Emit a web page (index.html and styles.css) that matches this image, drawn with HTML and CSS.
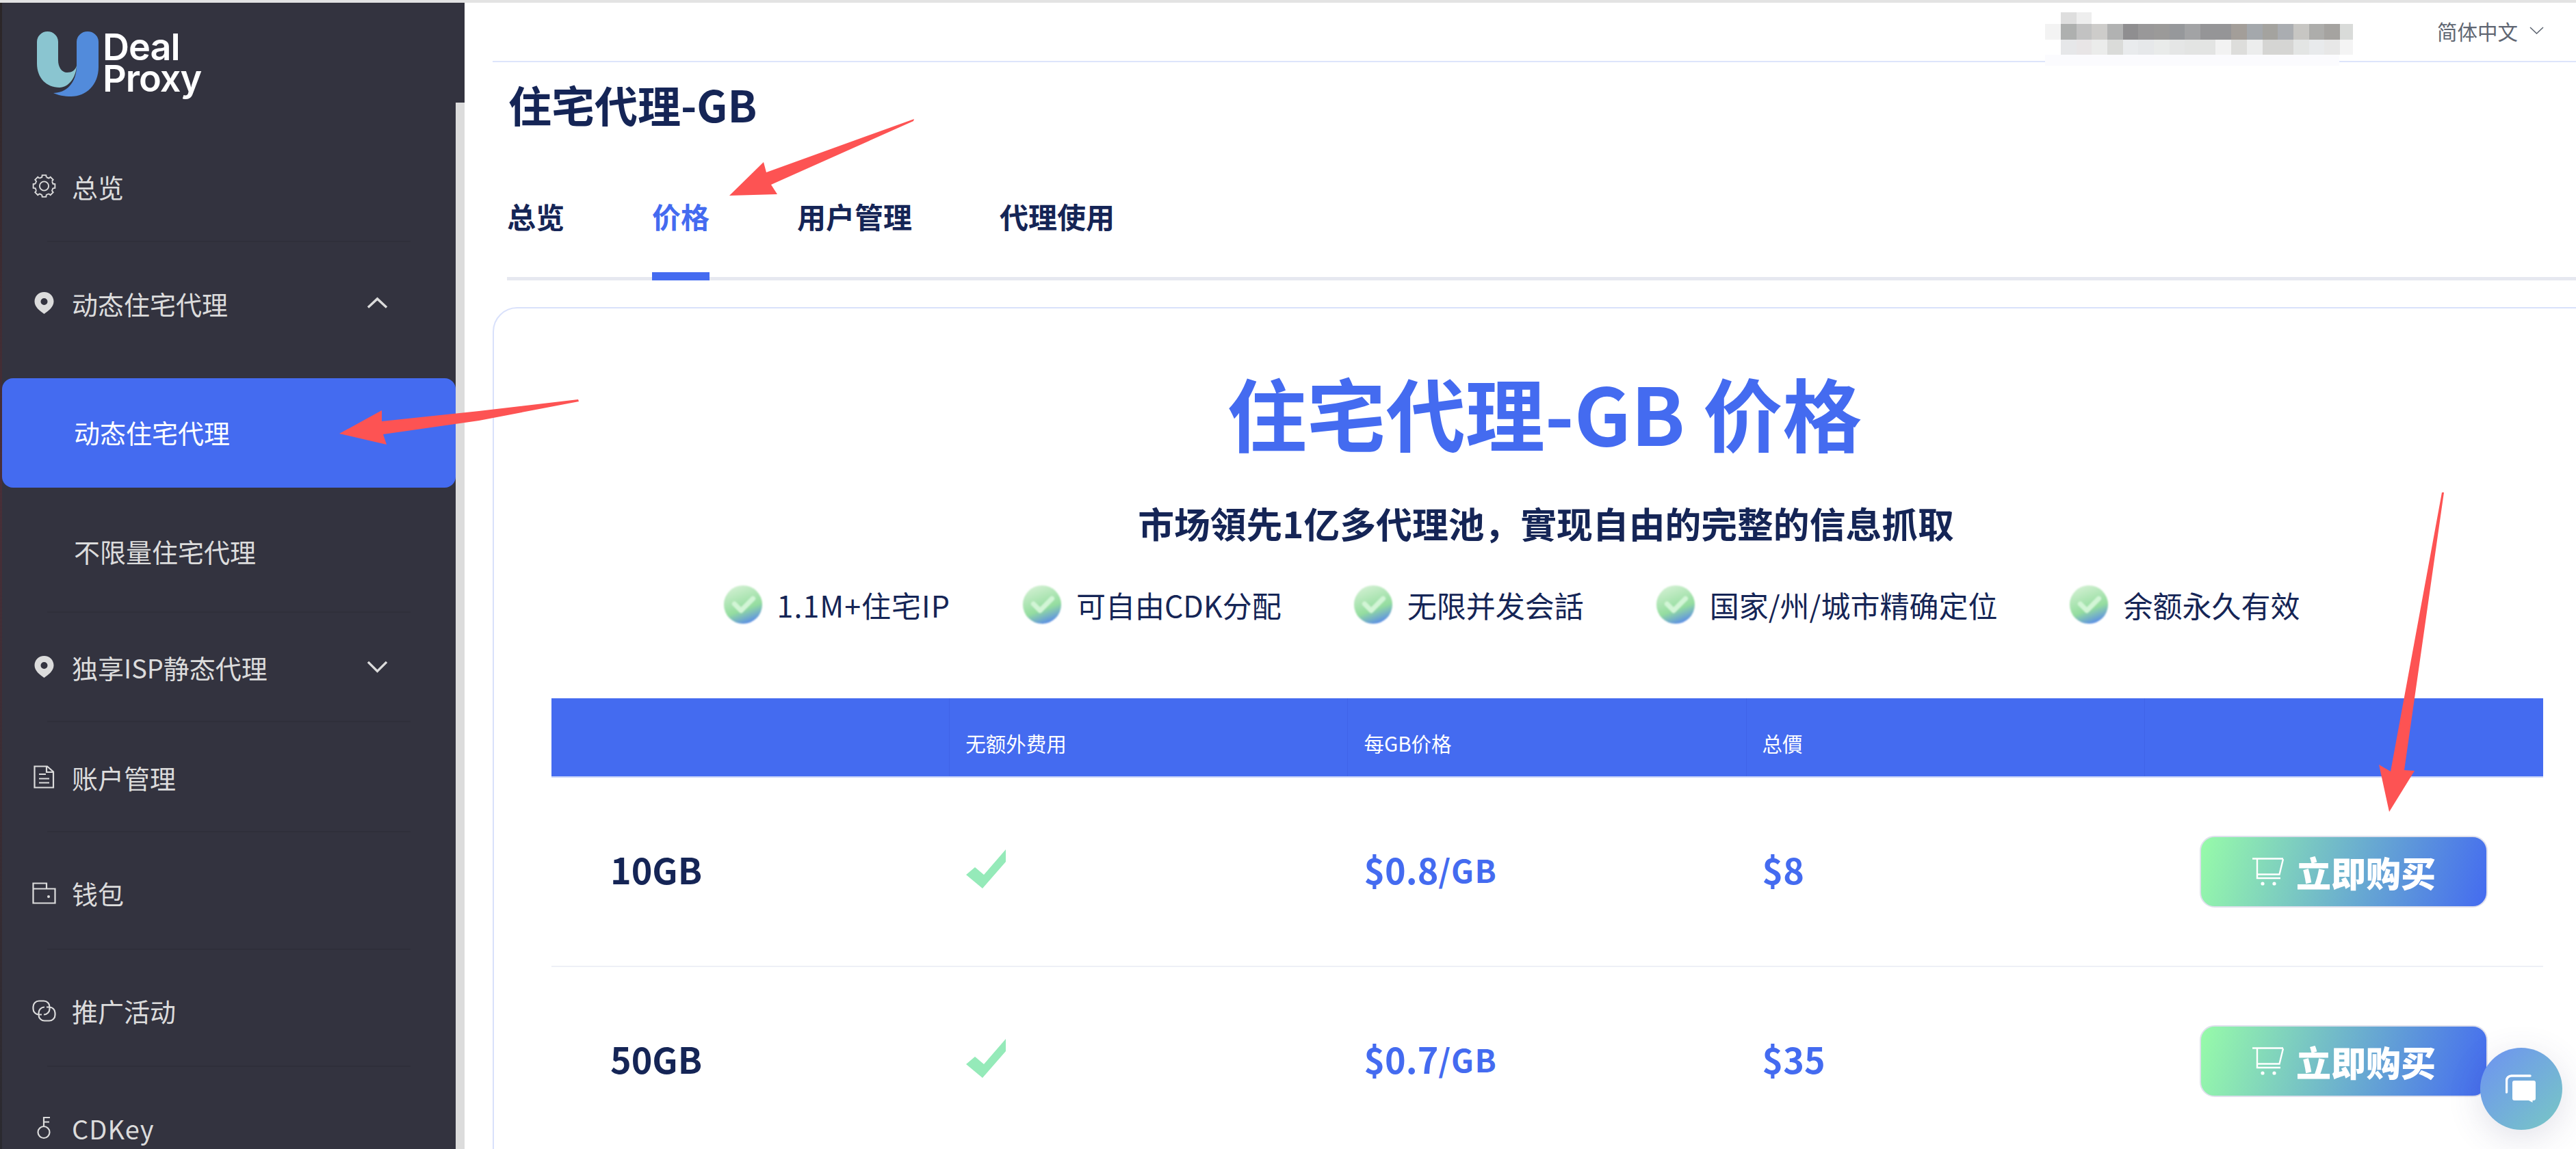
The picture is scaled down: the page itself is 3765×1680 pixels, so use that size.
FILE: index.html
```html
<!DOCTYPE html>
<html lang="zh-CN">
<head>
<meta charset="utf-8">
<title>住宅代理-GB 价格</title>
<link rel="stylesheet" href="styles.css">
</head>
<body>
<svg class="defs" width="0" height="0" aria-hidden="true">
  <defs>
    <linearGradient id="tickBall" x1="0.3" y1="0" x2="0.68" y2="1">
      <stop offset="0" stop-color="#d2f0d2"/>
      <stop offset="0.62" stop-color="#94dd9f"/>
      <stop offset="0.98" stop-color="#5b8de6"/>
    </linearGradient>
    <g id="gearTooth"><path d="M-3.4 -13.6L-3 -16.8H3L3.4 -13.6" fill="none" stroke="currentColor" stroke-width="2"/></g>
    <g id="pin"><path fill-rule="evenodd" d="M14 0C6 0 0 6.200 0 13.800C0 22 8 28 14 32C20 28 28 22 28 13.800C28 6.200 22 0 14 0ZM14 9A5 5 0 1 1 14 19A5 5 0 1 1 14 9Z" fill="currentColor"/></g>
    <g id="cart"><path d="M0 1.500H45M7 1.500V30H41M45 2L39.500 24.500H8" fill="none" stroke="currentColor" stroke-width="2.400"/><circle cx="15" cy="38" r="2.600" fill="currentColor"/><circle cx="32" cy="38" r="2.600" fill="currentColor"/></g>
    <g id="rowTick"><polygon points="0,37 13,26 26,37 58,0 58,18 24,57" fill="#95eab9"/></g>
    <g id="ballTick"><circle cx="30" cy="30" r="29" fill="url(#tickBall)"/><path d="M17 29L27 39L45 21" fill="none" stroke="#d2f5d6" stroke-width="7.500" stroke-linecap="round" stroke-linejoin="round"/></g>
  </defs>
</svg>

<div class="top-strip"></div>
<div class="app">
  <div class="wallpaper"></div>
  <aside class="sidebar">
    <div class="scroll-thumb"></div>
    <div class="logo">
      <svg class="logo-mark" viewBox="0 0 90 95" width="90" height="95" aria-hidden="true">
        <path d="M0 15A15.500 15 0 0 1 31 15V42C31 52 36 60 44 60C51 60 56 57 58 50C57 68 46 82 33 82C14 82 0 68 0 47Z" fill="#8ac5d0"/>
        <path d="M58 15A16 15 0 0 1 90 15V52C90 78 72 95 50 95C40 95 30 93 24 90C42 90 58 76 58 50Z" fill="#528bdb"/>
      </svg>
      <div class="logo-text">Deal
Proxy</div>
    </div>
    <nav class="nav">
      <a class="nav-item row-overview">
        <svg class="nav-icon" viewBox="-18 -18 36 36" aria-hidden="true">
          <circle r="14" fill="none" stroke="currentColor" stroke-width="2" stroke-dasharray="4.600 6.400" stroke-dashoffset="-3.200"/>
          <circle r="7" fill="none" stroke="currentColor" stroke-width="2"/>
          <use href="#gearTooth"/><use href="#gearTooth" transform="rotate(45)"/><use href="#gearTooth" transform="rotate(90)"/><use href="#gearTooth" transform="rotate(135)"/><use href="#gearTooth" transform="rotate(180)"/><use href="#gearTooth" transform="rotate(225)"/><use href="#gearTooth" transform="rotate(270)"/><use href="#gearTooth" transform="rotate(315)"/>
        </svg>
        <span>总览</span>
      </a>
      <div class="sep"></div>
      <a class="nav-item row-dynamic">
        <svg class="nav-icon" viewBox="-3.500 0 35 32" aria-hidden="true"><use href="#pin"/></svg>
        <span>动态住宅代理</span>
        <svg class="chevron" viewBox="0 0 32 18" aria-hidden="true"><path d="M2 16L16 3L30 16" fill="none" stroke="currentColor" stroke-width="3.500"/></svg>
      </a>
      <a class="sub-item sub-active">动态住宅代理</a>
      <a class="sub-item sub-plain">不限量住宅代理</a>
      <div class="sep"></div>
      <a class="nav-item row-isp">
        <svg class="nav-icon" viewBox="-3.500 0 35 32" aria-hidden="true"><use href="#pin"/></svg>
        <span>独享ISP静态代理</span>
        <svg class="chevron" viewBox="0 0 32 20" aria-hidden="true"><path d="M2 3L16 17L30 3" fill="none" stroke="currentColor" stroke-width="3.500"/></svg>
      </a>
      <div class="sep"></div>
      <a class="nav-item row-account">
        <svg class="nav-icon" viewBox="0 0 35 34" aria-hidden="true"><path d="M3.500 1.500H22L31 9.500V32.500H3.500ZM21 2V10H31M10 13H20M10 19.500H25M10 25.500H25" fill="none" stroke="currentColor" stroke-width="2.200"/></svg>
        <span>账户管理</span>
      </a>
      <div class="sep"></div>
      <a class="nav-item row-wallet">
        <svg class="nav-icon" viewBox="0 0 35 32" aria-hidden="true"><path d="M1.500 9.500H33.500V30.500H1.500ZM1.500 9.500V1.500H21V9.500" fill="none" stroke="currentColor" stroke-width="2.200"/><circle cx="24" cy="21" r="2" fill="currentColor"/></svg>
        <span>钱包</span>
      </a>
      <div class="sep"></div>
      <a class="nav-item row-promo">
        <svg class="nav-icon" viewBox="0 0 35 32" aria-hidden="true"><path d="M14 21.500H10A8.500 8.500 0 0 1 1.500 13V10A8.500 8.500 0 0 1 10 1.500H17A8.500 8.500 0 0 1 25.500 10V13A8.500 8.500 0 0 1 17 21.500M21 10.500H25A8.500 8.500 0 0 1 33.500 19V22A8.500 8.500 0 0 1 25 30.500H18A8.500 8.500 0 0 1 9.500 22V19A8.500 8.500 0 0 1 18 10.500" fill="none" stroke="currentColor" stroke-width="2.200"/></svg>
        <span>推广活动</span>
      </a>
      <div class="sep"></div>
      <a class="nav-item row-cdkey">
        <svg class="nav-icon" viewBox="-7 0 35 33" aria-hidden="true"><circle cx="10" cy="23" r="8.500" fill="none" stroke="currentColor" stroke-width="2.200"/><path d="M10 14.500V1.500H19M10 8H18" fill="none" stroke="currentColor" stroke-width="2.200"/></svg>
        <span class="cdkey-label">CDKey</span>
      </a>
    </nav>
  </aside>

  <main class="main">
    <header class="topbar">
      <span class="lang">简体中文</span>
      <svg class="lang-chevron" viewBox="0 0 21 11" aria-hidden="true"><path d="M1 1L10.500 10L20 1" fill="none" stroke="#5f6672" stroke-width="1.600"/></svg>
      <svg class="mosaic" viewBox="0 0 450 78" width="450" height="78" shape-rendering="crispEdges" aria-hidden="true">
        <rect x="0" y="62" width="430" height="16" fill="#fbfbfe"/>
        <rect x="23" y="0" width="23" height="17" fill="#dedede"/><rect x="46" y="0" width="22" height="17" fill="#eeeeee"/>
        <rect x="0" y="17" width="23" height="23" fill="#f3f3f3"/><rect x="23" y="17" width="23" height="23" fill="#aeb0af"/><rect x="46" y="17" width="22" height="23" fill="#c2c2c2"/><rect x="68" y="17" width="23" height="23" fill="#cdccca"/><rect x="91" y="17" width="23" height="23" fill="#b1b2b2"/><rect x="114" y="17" width="22" height="23" fill="#8f8e90"/><rect x="136" y="17" width="23" height="23" fill="#999899"/><rect x="159" y="17" width="23" height="23" fill="#9b9a99"/><rect x="182" y="17" width="22" height="23" fill="#96989b"/><rect x="204" y="17" width="23" height="23" fill="#a2a3a5"/><rect x="227" y="17" width="45" height="23" fill="#959597"/><rect x="272" y="17" width="23" height="23" fill="#a39e99"/><rect x="295" y="17" width="23" height="23" fill="#a4a8ac"/><rect x="318" y="17" width="22" height="23" fill="#a4a39f"/><rect x="340" y="17" width="23" height="23" fill="#aaadb1"/><rect x="363" y="17" width="23" height="23" fill="#c7c6c3"/><rect x="386" y="17" width="22" height="23" fill="#adadab"/><rect x="408" y="17" width="23" height="23" fill="#a5a3a0"/><rect x="431" y="17" width="19" height="23" fill="#d9dbd9"/>
        <rect x="23" y="40" width="23" height="22" fill="#e6e7e9"/><rect x="46" y="40" width="22" height="22" fill="#e8e5e6"/><rect x="68" y="40" width="23" height="22" fill="#ebeceb"/><rect x="91" y="40" width="23" height="22" fill="#dadbd9"/><rect x="114" y="40" width="22" height="22" fill="#e9ebed"/><rect x="136" y="40" width="23" height="22" fill="#e6e8ea"/><rect x="159" y="40" width="23" height="22" fill="#e9ebea"/><rect x="182" y="40" width="22" height="22" fill="#e5e6e6"/><rect x="204" y="40" width="45" height="22" fill="#e3e4e3"/><rect x="249" y="40" width="23" height="22" fill="#f2f2f2"/><rect x="272" y="40" width="23" height="22" fill="#dddddb"/><rect x="295" y="40" width="23" height="22" fill="#eceded"/><rect x="318" y="40" width="45" height="22" fill="#d5d5d3"/><rect x="363" y="40" width="23" height="22" fill="#e3e5e4"/><rect x="386" y="40" width="22" height="22" fill="#e8eaec"/><rect x="408" y="40" width="23" height="22" fill="#e7e7e7"/><rect x="431" y="40" width="19" height="22" fill="#f4f4f4"/>
      </svg>
    </header>

    <h1 class="page-title">住宅代理-GB</h1>
    <div class="tabs">
      <a class="tab">总览</a>
      <a class="tab tab-active">价格</a>
      <a class="tab">用户管理</a>
      <a class="tab">代理使用</a>
    </div>

    <section class="card">
      <h2 class="hero-title">住宅代理-GB 价格</h2>
      <p class="hero-sub">市场領先1亿多代理池，實现自由的完整的信息抓取</p>
      <ul class="features">
        <li class="feature feature-latin"><svg class="ball" viewBox="0 0 60 60" aria-hidden="true"><use href="#ballTick"/></svg>1.1M+住宅IP</li>
        <li class="feature"><svg class="ball" viewBox="0 0 60 60" aria-hidden="true"><use href="#ballTick"/></svg>可自由CDK分配</li>
        <li class="feature"><svg class="ball" viewBox="0 0 60 60" aria-hidden="true"><use href="#ballTick"/></svg>无限并发会話</li>
        <li class="feature"><svg class="ball" viewBox="0 0 60 60" aria-hidden="true"><use href="#ballTick"/></svg>国家/州/城市精确定位</li>
        <li class="feature"><svg class="ball" viewBox="0 0 60 60" aria-hidden="true"><use href="#ballTick"/></svg>余额永久有效</li>
      </ul>

      <div class="price-table">
        <div class="t-head">
          <div class="th"></div>
          <div class="th">无额外费用</div>
          <div class="th">每GB价格</div>
          <div class="th">总價</div>
          <div class="th"></div>
        </div>
        <div class="t-row">
          <div class="td td-name">10GB</div>
          <div class="td td-check"><svg class="row-tick" viewBox="0 0 58 58" aria-hidden="true"><use href="#rowTick"/></svg></div>
          <div class="td td-price">$0.8<small>/GB</small></div>
          <div class="td td-total">$8</div>
          <div class="td td-action"><a class="buy"><svg class="cart" viewBox="0 0 46 41" aria-hidden="true"><use href="#cart"/></svg>立即购买</a></div>
        </div>
        <div class="t-row">
          <div class="td td-name">50GB</div>
          <div class="td td-check"><svg class="row-tick" viewBox="0 0 58 58" aria-hidden="true"><use href="#rowTick"/></svg></div>
          <div class="td td-price">$0.7<small>/GB</small></div>
          <div class="td td-total">$35</div>
          <div class="td td-action"><a class="buy"><svg class="cart" viewBox="0 0 46 41" aria-hidden="true"><use href="#cart"/></svg>立即购买</a></div>
        </div>
      </div>
    </section>
  </main>
</div>

<a class="chat" aria-label="chat">
  <svg viewBox="0 0 46 42" width="46" height="42" aria-hidden="true">
    <path d="M1.500 26V9A7 7 0 0 1 8.500 2H36" fill="none" stroke="#fff" stroke-width="3.500" stroke-linecap="round"/>
    <path d="M13 9H41A3 3 0 0 1 44 12V35A3 3 0 0 1 41 38H39.500V41L34 38H13A3 3 0 0 1 10 35V12A3 3 0 0 1 13 9Z" fill="#fff"/>
  </svg>
</a>

<svg class="annotations" viewBox="0 0 3765 1680" width="3765" height="1680" aria-hidden="true">
  <polygon points="845,584 700,601 558,616 558,600 496,634 565,650 560,635 700,615 846,587" fill="#fd5353"/>
  <polygon points="1336,174 1120,252 1116,237 1066,286 1136,284 1127,270 1335,177" fill="#fd5353"/>
  <polygon points="3569,720 3494,1128 3477,1118 3492,1187 3529,1127 3514,1126 3572,720" fill="#fd5353"/>
</svg>
</body>
</html>
```

FILE: styles.css
```css
* { box-sizing: border-box; }
html, body { margin: 0; padding: 0; }
body {
  position: relative;
  width: 3765px;
  height: 1680px;
  overflow: hidden;
  background: #fff;
  font-family: "Noto Sans CJK SC", "Noto Sans", sans-serif;
  color: #152556;
}
.defs { position: absolute; }
.top-strip { height: 4px; background: #e3e3e3; }
.app { display: flex; height: 1676px; }
.wallpaper { width: 3px; background: linear-gradient(180deg, #2a2628 0%, #4a2f38 40%, #3a2c33 70%, #2a2a30 100%); }

/* Sidebar */
.sidebar {
  position: relative;
  width: 676px;
  flex: none;
  padding-right: 13px;
  background: #33333f;
  color: #dcdcdc;
  overflow: hidden;
}
.scroll-thumb {
  position: absolute;
  right: 0;
  top: 146px;
  bottom: 0;
  width: 13px;
  background: #dcdcdc;
}
.logo { display: flex; height: 192px; padding: 42px 0 0 51px; }
.logo-mark { flex: none; }
.logo-text {
  margin-left: 6px;
  color: #fff;
  font-family: Inter, sans-serif;
  font-weight: 600;
  font-size: 54px;
  line-height: 46px;
  letter-spacing: -1px;
  white-space: pre-line;
}
.nav { display: flex; flex-direction: column; font-size: 38px; }
.nav-item { display: flex; align-items: center; padding: 0 99px 0 44px; }
.nav-icon { width: 35px; height: 34px; margin-right: 23px; flex: none; }
.chevron { width: 31px; margin-left: auto; flex: none; }
.cdkey-label { letter-spacing: 1px; }
.sep { height: 2px; margin: 0 66px; background: #2f2f3a; flex: none; }
.row-overview { height: 156px; padding-bottom: 4px; }
.row-dynamic { height: 182px; padding-bottom: 4px; }
.row-isp { height: 158px; }
.row-account { height: 159px; padding-top: 1px; }
.row-wallet { height: 170px; padding-top: 7px; }
.row-promo { height: 169px; padding-top: 8px; }
.row-cdkey { height: 182px; padding-bottom: 4px; }
.sub-item { display: flex; align-items: center; padding-left: 105px; }
.sub-active {
  height: 160px;
  margin-top: 17px;
  padding-bottom: 4px;
  border-radius: 16px;
  background: #446bf0;
  color: #fff;
}
.sub-plain { height: 181px; padding-top: 3px; }

/* Main */
.main { flex: 1; min-width: 0; padding-left: 41px; }
.topbar {
  position: relative;
  display: flex;
  align-items: center;
  justify-content: flex-end;
  height: 87px;
  padding: 0 47px 4px 0;
  border-bottom: 2px solid #dde4fb;
}
.lang { font-size: 29.500px; color: #5f6672; }
.lang-chevron { width: 21px; height: 11px; margin-left: 17px; }
.mosaic { position: absolute; left: 2269px; top: 14px; }
.page-title {
  margin: 21px 0 0 23px;
  font-size: 63px;
  line-height: 80px;
  font-weight: 700;
}
.tabs {
  display: flex;
  gap: 128px;
  margin: 32px 0 0 21px;
  height: 186px;
  border-bottom: 5px solid #e6e8f0;
}
.tab {
  position: relative;
  display: flex;
  align-items: center;
  height: 181px;
  padding-top: 1px;
  font-size: 42px;
  font-weight: 700;
}
.tab-active { color: #446bf0; }
.tab-active::after {
  content: "";
  position: absolute;
  left: 0;
  right: 0;
  bottom: -5px;
  height: 12px;
  background: #446bf0;
}

/* Card */
.card {
  margin: 39px -40px 0 0;
  height: 1300px;
  padding: 70px 86px 0 84px;
  border: 2px solid #d9e1fb;
  border-radius: 36px;
}
.hero-title {
  margin: 0 8px 0 0;
  text-align: center;
  font-size: 116px;
  line-height: 160px;
  font-weight: 700;
  color: #446bf0;
}
.hero-sub {
  margin: 41px 4px 0 0;
  text-align: center;
  font-size: 52.800px;
  line-height: 84px;
  font-weight: 700;
}
.features {
  display: flex;
  justify-content: center;
  margin: 48px 0 0;
  padding: 0;
  list-style: none;
  font-size: 43px;
  line-height: 60px;
}
.feature { display: flex; align-items: center; margin-right: 105px; }
.feature-latin { letter-spacing: 1px; }
.ball { width: 58px; height: 60px; margin-right: 21px; filter: blur(1.200px); }

/* Table */
.price-table { margin-top: 107px; }
.t-head, .t-row { display: grid; grid-template-columns: repeat(5, 1fr); }
.t-head { height: 116px; background: #446bf0; border-bottom: 2px solid #c5d2fa; }
.th {
  display: flex;
  align-items: center;
  padding: 16px 0 0 23px;
  font-size: 29.500px;
  color: #fff;
  border-right: 1px solid #3f63e8;
}
.th:last-child { border-right: 0; }
.t-row { height: 277px; border-bottom: 2px solid #eef0f6; }
.td { display: flex; align-items: center; font-size: 52px; font-weight: 700; }
.td-name, .td-check, .td-price, .td-total { padding-bottom: 8px; }
.td-name { padding-left: 86px; }
.td-check { padding-left: 24px; }
.row-tick { width: 58px; height: 58px; filter: blur(0.700px); }
.td-price, .td-total { padding-left: 23px; color: #446bf0; }
.td-price small { font-size: 46px; font-weight: 700; letter-spacing: 1.500px; }
.td-action { justify-content: center; }
.buy {
  display: flex;
  align-items: center;
  justify-content: center;
  width: 421px;
  height: 105px;
  border: 2px solid #dfe0ec;
  border-radius: 22px;
  background: linear-gradient(105deg, #97fba9 0%, #446bf0 100%);
  color: #fff;
  font-size: 51px;
  font-weight: 900;
}
.cart { width: 46px; height: 41px; margin-right: 18px; }

/* Overlays */
.chat {
  position: absolute;
  left: 3625px;
  top: 1532px;
  display: flex;
  align-items: center;
  justify-content: center;
  width: 120px;
  height: 120px;
  border-radius: 50%;
  background: linear-gradient(135deg, #6d92f2 0%, #78c8c4 100%);
  box-shadow: 0 12px 50px rgba(70, 70, 120, 0.16);
}
.annotations { position: absolute; left: 0; top: 0; pointer-events: none; }
```
